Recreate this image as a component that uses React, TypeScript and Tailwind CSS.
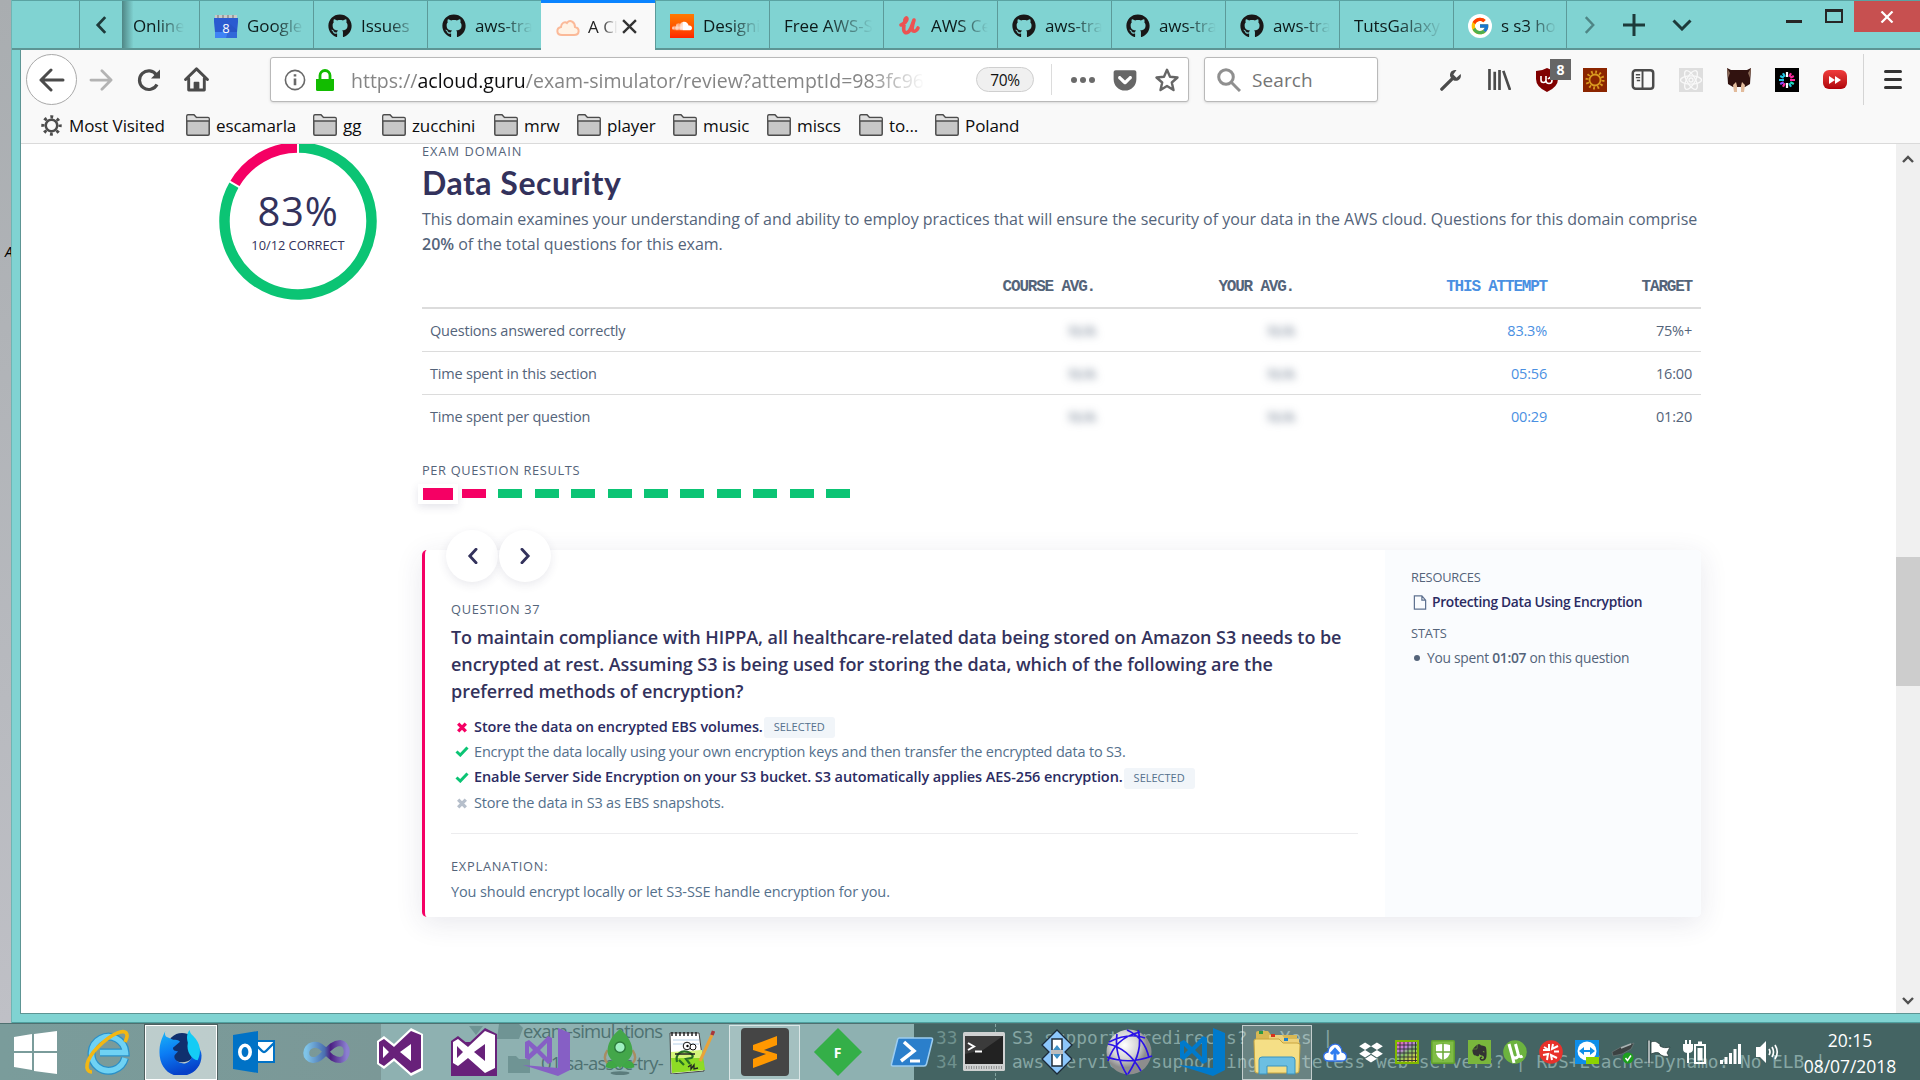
import React from "react";
import { FaGithub, FaSoundcloud, FaDropbox, FaEvernote, FaGetPocket } from "react-icons/fa";
import { FcGoogle } from "react-icons/fc";

type Kids = { children?: React.ReactNode };

/* ---------- tab strip ---------- */

const fade = "[mask-image:linear-gradient(to_right,#000_45%,transparent_98%)]";

function CalendarIcon() {
  return (
    <svg viewBox="0 0 24 24" className="h-6 w-6">
      <path d="M1 1h22v4H1z" fill="#c9c9c9" />
      <path d="M4 1v3M9 1v3M14 1v3M19 1v3" stroke="#8a8a8a" strokeWidth="1.4" />
      <path d="M0 4h24v4l-1 10H1L0 8z" fill="#2a5bd0" />
      <path d="M1 18h22v6H1z" fill="#3f83f4" />
      <path d="M16 10l7 6v8H12z" fill="#2450bb" opacity=".5" />
      <text x="12" y="18.5" textAnchor="middle" fontSize="13" fontFamily="Open Sans, sans-serif" fill="#fff">8</text>
    </svg>
  );
}
function SoundcloudIcon() {
  return (
    <span className="flex h-6 w-6 items-center justify-center bg-linear-to-b from-[#ff7a00] to-[#ff2200]">
      <FaSoundcloud className="h-5 w-5 text-white" />
    </span>
  );
}
function UdemyIcon() {
  return (
    <svg viewBox="0 0 24 24" className="h-6 w-6" fill="none" stroke="#ec5252" strokeWidth="3.6" strokeLinecap="round" strokeLinejoin="round">
      <path d="M3 11c3-1 6-4 6-6 0-2-2-1-2 1-1 5-2 8-1 11s5 2 7-3l3-8c-1 4-3 9-1 11 2 1 4-1 5-3" />
    </svg>
  );
}
function CloudIcon() {
  return (
    <svg viewBox="0 0 24 24" className="h-6 w-6" fill="#fff3e6" stroke="#fbb998" strokeWidth="2">
      <path d="M6 20c-6 0-6-7-1-8 0-4 4-6 6-4 3-4 8-1 8 4 5 1 5 8-1 8z" />
    </svg>
  );
}
const Hub = () => <FaGithub className="h-6 w-6 text-[#191717]" />;
const GoogleBall = () => (
  <span className="flex h-6 w-6 items-center justify-center rounded-full bg-white">
    <FcGoogle className="h-[20px] w-[20px]" />
  </span>
);

function Tab({ icon, label, last }: { icon?: React.ReactNode; label: string; last?: boolean }) {
  return (
    <div className={`flex h-full w-[114px] shrink-0 items-center border-l border-[#5c9a99] pl-[14px] pr-2 pt-[3px] ${last ? "border-r" : ""}`}>
      {icon && <span className="mr-[9px] shrink-0">{icon}</span>}
      <span className={`min-w-0 flex-1 overflow-hidden whitespace-nowrap text-[17px] tracking-[-0.1px] text-[#0c1a1a] ${fade}`}>{label}</span>
    </div>
  );
}

function TabBar() {
  return (
    <div className="flex h-[50px] items-stretch border-b-2 border-t border-b-[#5d9594] border-t-[#5aa3a2] text-[#1d3a3a]">
      <div className="w-[67px]" />
      <div className="flex w-[43px] items-center justify-center border-l border-[#5c9a99]">
        <svg viewBox="0 0 14 20" className="h-[20px] w-[13px]" fill="none" stroke="currentColor" strokeWidth="3"><path d="M11 1.500L3 10l8 8.500" /></svg>
      </div>
      <div className="flex w-[77px] items-center bg-linear-to-r from-[#4f8685] to-transparent to-15% pl-[11px] pr-[14px] pt-[3px] text-[17px] tracking-[-0.1px] text-[#0c1a1a]">
        <span className={`overflow-hidden whitespace-nowrap ${fade}`}>Online</span>
      </div>
      <Tab icon={<CalendarIcon />} label="Google C" />
      <Tab icon={<Hub />} label="Issues" />
      <Tab icon={<Hub />} label="aws-train" />
      <div className="-mb-[2px] -mt-px flex w-[114px] shrink-0 items-center border-t-[3px] border-[#0a84ff] bg-[#f9f9f9] pl-[15px]">
        <CloudIcon />
        <span className={`ml-[8px] w-[30px] overflow-hidden whitespace-nowrap text-[17px] text-[#222] ${fade}`}>A Clo</span>
        <svg viewBox="0 0 14 14" className="ml-[4px] h-[15px] w-[15px]" stroke="#333" strokeWidth="2.200"><path d="M1 1l12 12M13 1L1 13" /></svg>
      </div>
      <Tab icon={<SoundcloudIcon />} label="Designing" />
      <Tab label="Free AWS-So" />
      <Tab icon={<UdemyIcon />} label="AWS Ce" />
      <Tab icon={<Hub />} label="aws-train" />
      <Tab icon={<Hub />} label="aws-train" />
      <Tab icon={<Hub />} label="aws-train" />
      <Tab label="TutsGalaxy" />
      <Tab icon={<GoogleBall />} label="s s3 hos" last />
      <div className="flex items-center pl-[16px]">
        <svg viewBox="0 0 14 20" className="h-[20px] w-[13px] opacity-50" fill="none" stroke="currentColor" strokeWidth="2.600"><path d="M3 1.500L11 10l-8 8.500" /></svg>
        <svg viewBox="0 0 22 22" className="ml-[27px] h-[22px] w-[22px]" stroke="currentColor" strokeWidth="3"><path d="M11 0v22M0 11h22" /></svg>
        <svg viewBox="0 0 20 12" className="ml-[27px] h-[12px] w-[20px]" fill="none" stroke="currentColor" strokeWidth="3"><path d="M1.500 1.500L10 10l8.500-8.500" /></svg>
      </div>
      <div className="ml-auto flex items-start">
        <div className="mr-[23px] mt-[19px] h-[3px] w-[16px] bg-[#262626]" />
        <div className="mr-[11px] mt-[8px] h-[14px] w-[18px] border-2 border-t-[3px] border-[#262626]" />
        <div className="flex h-[31px] w-[66px] items-center justify-center bg-[#c75050]">
          <svg viewBox="0 0 14 12" className="h-[12px] w-[14px]" stroke="#fff" strokeWidth="2.200"><path d="M1.500.5l11 11M12.500.5l-11 11" /></svg>
        </div>
      </div>
    </div>
  );
}

/* ---------- navigation toolbar ---------- */

function Slot({ children }: Kids) {
  return <div className="flex w-12 shrink-0 items-center justify-center">{children}</div>;
}

function NavBar() {
  return (
    <div className="flex h-[58px] items-center pt-px text-[#4b4b4b]">
      <div className="ml-[5px] flex h-[51px] w-[51px] items-center justify-center rounded-full border border-[#a9a9a9] bg-white">
        <svg viewBox="0 0 26 24" className="h-[24px] w-[26px]" fill="none" stroke="currentColor" strokeWidth="3" strokeLinecap="round" strokeLinejoin="round"><path d="M24 12H2M12 2L2 12l10 10" /></svg>
      </div>
      <svg viewBox="0 0 26 24" className="ml-[12px] h-[22px] w-[24px]" fill="none" stroke="#b3b3b3" strokeWidth="3" strokeLinecap="round" strokeLinejoin="round"><path d="M2 12h22M14 2l10 10-10 10" /></svg>
      <svg viewBox="0 0 24 24" className="ml-[24px] h-[24px] w-[24px]" fill="none" stroke="currentColor" strokeWidth="3.200"><path d="M20 16.500A9.300 9.300 0 1 1 19.500 7" /><path d="M23 1.500V10.500H14z" fill="currentColor" stroke="none" /></svg>
      <svg viewBox="0 0 24 24" className="ml-[23px] h-[25px] w-[25px]" fill="none" stroke="currentColor" strokeWidth="2.800" strokeLinejoin="round" strokeLinecap="round"><path d="M1.500 12L12 1.800 22.500 12M4.500 11v11h15V11" /><path d="M10 22v-7h4v7" fill="currentColor" strokeWidth="1.500" /></svg>
      <div className="ml-[61px] flex h-[45px] w-[919px] shrink-0 items-center rounded-[3px] border border-[#b9b9b9] bg-white shadow-sm">
        <svg viewBox="0 0 22 22" className="ml-[13px] h-[22px] w-[22px]" fill="none" stroke="#686868" strokeWidth="1.600"><circle cx="11" cy="11" r="9.600" /><path d="M11 9.500v6.800M11 5.200v2.400" strokeWidth="2.600" /></svg>
        <svg viewBox="0 0 18 22" className="ml-[10px] h-[22px] w-[18px]" fill="#12bc00"><path d="M0 10h18v10.500q0 1.500-1.500 1.500h-15Q0 22 0 20.500z" /><path d="M4 11V6.500a5 5 0 0 1 10 0V11" fill="none" stroke="#12bc00" strokeWidth="2.800" /></svg>
        <div className="ml-[17px] w-[574px] overflow-hidden whitespace-nowrap pt-[2px] text-[19.500px] text-[#858585] [mask-image:linear-gradient(to_right,#000_90%,transparent)]">
          https://<span className="text-[#0c0c0d]">acloud.guru</span>/exam-simulator/review?attemptId=983fc96e
        </div>
        <div className="ml-[51px] flex h-[25px] w-[58px] items-center justify-center rounded-full border border-[#cfcfcf] bg-[#f0f0f0] pt-[2px] text-[15.500px] tracking-[-0.3px] text-[#111]">70%</div>
        <div className="ml-[17px] h-[31px] w-px bg-[#dcdcdc]" />
        <svg viewBox="0 0 24 6" className="ml-[19px] h-[6px] w-[24px]" fill="#6a6a6a"><circle cx="3" cy="3" r="3" /><circle cx="12" cy="3" r="3" /><circle cx="21" cy="3" r="3" /></svg>
        <FaGetPocket className="ml-[17px] h-[26px] w-[26px] text-[#666]" />
        <svg viewBox="0 0 24 24" className="ml-[17px] h-[24px] w-[24px]" fill="none" stroke="#666" strokeWidth="2.400" strokeLinejoin="round"><path d="M12 1.800l3 7 7.500.7-5.700 5 1.700 7.500-6.500-4-6.500 4 1.700-7.500-5.700-5 7.500-.7z" /></svg>
      </div>
      <div className="ml-[15px] flex h-[45px] w-[174px] shrink-0 items-center rounded-[3px] border border-[#b9b9b9] bg-white shadow-sm">
        <svg viewBox="0 0 24 24" className="ml-[12px] h-[24px] w-[24px]" fill="none" stroke="#8f8f8f" strokeWidth="3"><circle cx="9" cy="9" r="7.300" /><path d="M14 14l9 9" /></svg>
        <span className="ml-[11px] pt-[2px] text-[19px] tracking-[0.1px] text-[#757575]">Search</span>
      </div>
      <div className="ml-[49px] flex shrink-0">
        <Slot><svg viewBox="0 0 24 24" className="h-[22px] w-[24px]"><path d="M2 22L13 11" stroke="#4b4b4b" strokeWidth="3.600" strokeLinecap="round" /><path d="M22.500 5.500l-4.500 4-3.500-3.500L18 1.200C13 0 9.500 4.500 11.500 9l3.500 3.500c5 1.800 9-2.500 7.500-7z" fill="#4b4b4b" /></svg></Slot>
        <Slot><svg viewBox="0 0 24 22" className="h-[21px] w-[23px]" stroke="#4b4b4b" strokeWidth="2.800"><path d="M1.500 0v22M7 3v19M12 1v21M16 2l7 20" /></svg></Slot>
        <Slot>
          <div className="relative">
            <svg viewBox="0 0 22 24" className="h-[24px] w-[22px]"><path d="M11 0q5 3 11 3v8q0 8-11 13Q0 19 0 11V3q6 0 11-3z" fill="#800000" /><path d="M5 8v4q0 2.500 2.500 2.500T10 12V8M10 12.500a3 3 0 1 0 3-3M16 11q-2-2-4 0" fill="none" stroke="#fff" strokeWidth="1.600" /></svg>
            <span className="absolute left-[14px] top-[-9px] flex h-[21px] w-[21px] items-center justify-center bg-[#666] text-[14px] font-bold text-white">8</span>
          </div>
        </Slot>
        <Slot>
          <svg viewBox="0 0 24 24" className="h-6 w-6"><path d="M0 0h24v24H0z" fill="#8b2500" /><circle cx="12" cy="12" r="8" fill="none" stroke="#d99a20" strokeWidth="3" strokeDasharray="1.700 2.490" /><circle cx="12" cy="12" r="5.500" fill="none" stroke="#d99a20" strokeWidth="1.800" /></svg>
        </Slot>
        <Slot><svg viewBox="0 0 24 22" className="h-[21px] w-[24px]" fill="none" stroke="#4b4b4b"><rect x="1.300" y="1.300" width="21.400" height="19.400" rx="3" strokeWidth="2.600" /><path d="M11.500 1v20" strokeWidth="2" /><path d="M4.500 6h4.500M4.500 9h4.500M5.500 12h3.500" strokeWidth="1.500" /></svg></Slot>
        <Slot>
          <svg viewBox="0 0 24 24" className="h-6 w-6"><path d="M0 0h24v24H0z" fill="#dedede" /><g fill="none" stroke="#f8f8f8" strokeWidth="1.300"><ellipse cx="12" cy="12" rx="10.500" ry="4.200" /><ellipse cx="12" cy="12" rx="10.500" ry="4.200" transform="rotate(60 12 12)" /><ellipse cx="12" cy="12" rx="10.500" ry="4.200" transform="rotate(120 12 12)" /><circle cx="12" cy="12" r="2" /></g></svg>
        </Slot>
        <Slot>
          <svg viewBox="0 0 24 24" className="h-6 w-6"><path d="M0 0l4 2h16l4-2-1 16-5 3H6l-5-3z" fill="#31120f" /><path d="M6 17l3-3 1 4v6H7zM18 17l-3-3-1 4v6h3z" fill="#e2bb9b" /><path d="M0 0l3 5-2 5zM24 0l-3 5 2 5z" fill="#8a6a58" /></svg>
        </Slot>
        <Slot>
          <svg viewBox="0 0 24 24" className="h-6 w-6"><path d="M0 0h24v24H0z" fill="#000" /><g strokeWidth="2.200">
            <path d="M12 4v5M12 15v5" stroke="#fff" /><path d="M8 5.200l1.800 3.500M5.200 8l3.500 1.800M16 18.800l-1.800-3.500M4 12h5" stroke="#22c8e6" /><path d="M16 5.200l-1.800 3.500M18.800 8l-3.500 1.800M15 12h5M8 18.800l1.800-3.500" stroke="#ff2aa0" /><path d="M5.200 16l3.500-1.800" stroke="#8f4bff" /><path d="M18.800 16l-3.500-1.800" stroke="#22e0c0" /></g></svg>
        </Slot>
        <Slot>
          <span className="flex h-[19px] w-[24px] items-center justify-center rounded-[6px] bg-linear-to-b from-[#f03c3c] to-[#b00008]">
            <svg viewBox="0 0 12 8" className="h-[8px] w-[12px]" fill="#fff"><path d="M0 0l6 4-6 4zM6 0l6 4-6 4z" /></svg>
          </span>
        </Slot>
      </div>
      <div className="ml-[4px] h-[51px] w-px bg-[#d5d5d5]" />
      <div className="ml-[20px] flex flex-col gap-[5px]">
        <span className="h-[3px] w-[18px] rounded bg-[#333]" />
        <span className="h-[3px] w-[18px] rounded bg-[#333]" />
        <span className="h-[3px] w-[18px] rounded bg-[#333]" />
      </div>
    </div>
  );
}

/* ---------- bookmarks ---------- */

function Folder() {
  return (
    <svg viewBox="0 0 24 22" className="-mt-px h-[22px] w-[24px] shrink-0" stroke="#4c4c4c" strokeWidth="1.500"><path d="M.8 2q0-1.200 1.200-1.200h6l2.500 2.700H22q1.200 0 1.200 1.200v15.300q0 1.200-1.200 1.200H2Q.8 21.200.8 20z" fill="#c7c7c7" /><path d="M1.500 7V1.800h6L10 4.300h12.500V7z" fill="#dedede" stroke="none" /><path d="M1 7h22" /></svg>
  );
}
const bookmarks = [
  { name: "escamarla", w: "w-[127px]" },
  { name: "gg", w: "w-[69px]" },
  { name: "zucchini", w: "w-[112px]" },
  { name: "mrw", w: "w-[83px]" },
  { name: "player", w: "w-[96px]" },
  { name: "music", w: "w-[94px]" },
  { name: "miscs", w: "w-[92px]" },
  { name: "to...", w: "w-[76px]" },
  { name: "Poland", w: "w-[110px]" },
];
function Bookmarks() {
  return (
    <div className="flex h-[36px] items-center border-b border-[#dadada] text-[17px] tracking-[-0.1px] text-[#0c0c0d]">
      <div className="flex w-[165px] items-center pl-[20px]">
        <svg viewBox="0 0 22 22" className="h-[21px] w-[21px]" fill="none" stroke="#4c4c4c"><circle cx="11" cy="11" r="6" strokeWidth="2.600" /><circle cx="11" cy="11" r="9" strokeWidth="3.400" strokeDasharray="3 4.070" strokeDashoffset="1.500" /></svg>
        <span className="ml-[7px] whitespace-nowrap">Most Visited</span>
      </div>
      {bookmarks.map((b) => (
        <div key={b.name} className={`flex shrink-0 items-center gap-[6px] ${b.w}`}>
          <Folder />
          <span>{b.name}</span>
        </div>
      ))}
    </div>
  );
}

/* ---------- page ---------- */

function Ring() {
  return (
    <div className="relative ml-[198px] mt-[-2px] h-[158px] w-[158px] shrink-0">
      <svg viewBox="0 0 158 158" className="h-full w-full" fill="none" strokeWidth="10.500">
        <path d="M15.350 42.250A73.500 73.500 0 0 1 79 5.500" stroke="#f50064" />
        <path d="M79 5.500A73.500 73.500 0 1 1 15.350 42.250" stroke="#0bc474" />
        <path d="M79 0v12M10 39.200l12 6.900" stroke="#fff" strokeWidth="2" />
      </svg>
      <div className="absolute inset-0 flex flex-col items-center text-[#33325c]">
        <span className="mt-[42px] text-[40px] leading-[54px] tracking-[0.8px]">83%</span>
        <span className="-mt-px text-[12.800px] leading-[16px]">10/12 CORRECT</span>
      </div>
    </div>
  );
}

function Label({ children, className = "" }: Kids & { className?: string }) {
  return <div className={`text-[12.800px] leading-[16px] text-[#54647a] ${className}`}>{children}</div>;
}

const rows = [
  ["Questions answered correctly", "83.3%", "75%+"],
  ["Time spent in this section", "05:56", "16:00"],
  ["Time spent per question", "00:29", "01:20"],
];
const grid = "grid grid-cols-[681px_199px_253px_146px]";

function Stats() {
  return (
    <div className="mt-[5px]">
      <div className={`${grid} h-[47px] items-center border-b-2 border-[#dcdcdc] pt-[5px] text-right font-['Liberation_Mono',monospace] text-[16px] font-bold tracking-[-1.200px] text-[#54647a]`}>
        <span className="pr-[8px]">COURSE AVG.</span>
        <span className="pr-[8px]">YOUR AVG.</span>
        <span className="pr-[8px] text-[#4a90e2]">THIS ATTEMPT</span>
        <span className="pr-[9px]">TARGET</span>
      </div>
      {rows.map((r) => (
        <div key={r[0]} className={`${grid} h-[43px] items-center border-b border-[#dcdcdc] pt-[2px] text-right text-[14.500px] tracking-[-0.2px] text-[#54647a] last:border-0 last:pt-0`}>
          <span className="col-start-1 row-start-1 pl-2 text-left">{r[0]}</span>
          <span className="col-start-1 row-start-1 -mt-px pr-[7px] text-[15px] tracking-[0.3px] blur-[4px]">N/A</span>
          <span className="-mt-px pr-[7px] text-[15px] tracking-[0.3px] blur-[4px]">N/A</span>
          <span className="pr-2 text-[#4a90e2]">{r[1]}</span>
          <span className="pr-[9px]">{r[2]}</span>
        </div>
      ))}
    </div>
  );
}

function QuestionBars() {
  return (
    <div className="ml-[-4px] mt-[6px] flex h-[19px] items-center">
      <span className="flex h-[20px] w-[40px] items-center justify-center bg-white shadow-[0_3px_8px_rgba(50,50,93,.13)]">
        <span className="h-[12px] w-[30px] bg-[#f50064]" />
      </span>
      <span className="ml-[4px] h-[9px] w-[24px] bg-[#f50064]" />
      {Array.from({ length: 10 }, (_, i) => (
        <span key={i} className="ml-[12.400px] h-[9px] w-[24px] bg-[#0bc474]" />
      ))}
    </div>
  );
}

function RoundButton({ d }: { d: string }) {
  return (
    <span className="flex h-[52px] w-[52px] items-center justify-center rounded-full bg-white shadow-[0_3px_10px_rgba(50,50,93,.10)]">
      <svg viewBox="0 0 12 18" className="h-[16px] w-[11px]" fill="none" stroke="#33325c" strokeWidth="3.200" strokeLinecap="round"><path d={d} /></svg>
    </span>
  );
}

function Option({ kind, strong, children }: Kids & { kind: "wrong" | "right" | "off"; strong?: boolean }) {
  return (
    <div className="flex h-[25.300px] items-center whitespace-nowrap text-[14.500px] text-[#54708c]">
      <span className="mr-[5px] flex w-[18px] justify-end">
        {kind === "right" ? (
          <svg viewBox="0 0 13 11" className="h-[11px] w-[14px] text-[#0bc474]" fill="none" stroke="currentColor" strokeWidth="3"><path d="M1 5.500l3.800 3.500L12 1.500" /></svg>
        ) : (
          <svg viewBox="0 0 11 11" className={kind === "wrong" ? "mr-[2px] mt-[2px] h-[11px] w-[10px] text-[#f50064]" : "mr-[2px] mt-[2px] h-[11px] w-[10px] text-[#b6bfcb]"} stroke="currentColor" strokeWidth="3.600"><path d="M1.300 1.300l8.400 8.400M9.700 1.300L1.300 9.700" /></svg>
        )}
      </span>
      <span className={strong ? "font-semibold tracking-[-0.090px] text-[#2b2b62]" : "tracking-[-0.180px]"}>{children}</span>
      {strong && <span className="ml-px mt-[2px] flex h-[21px] w-[71px] items-center justify-center rounded-[3px] bg-[#f1f5f9] text-[11px] text-[#54708c]">SELECTED</span>}
    </div>
  );
}

function QuestionCard() {
  return (
    <div className="relative mt-[47px] flex h-[367px] rounded-[5px] border-l-[3px] border-[#f50064] bg-white shadow-[0_6px_28px_rgba(50,50,93,.11)]">
      <div className="absolute left-[21px] top-[-20px] flex gap-px">
        <RoundButton d="M10 1.500L3 9l7 7.500" />
        <RoundButton d="M2 1.500L9 9l-7 7.500" />
      </div>
      <div className="w-[960px] pl-[26px] pr-[27px]">
        <Label className="mt-[51px] tracking-[0.7px]">QUESTION 37</Label>
        <p className="mt-[7px] whitespace-nowrap text-[18px] font-semibold leading-[27px] tracking-[-0.050px] text-[#33325c]">
          To maintain compliance with HIPPA, all healthcare-related data being stored on Amazon S3 needs to be
          <br />
          encrypted at rest. Assuming S3 is being used for storing the data, which of the following are the
          <br />
          preferred methods of encryption?
        </p>
        <div className="mt-[9px]">
          <Option kind="wrong" strong>Store the data on encrypted EBS volumes.</Option>
          <Option kind="right">Encrypt the data locally using your own encryption keys and then transfer the encrypted data to S3.</Option>
          <Option kind="right" strong>Enable Server Side Encryption on your S3 bucket. S3 automatically applies AES-256 encryption.</Option>
          <Option kind="off">Store the data in S3 as EBS snapshots.</Option>
        </div>
        <div className="mt-[18px] h-px bg-[#ececee]" />
        <Label className="mt-[24px] tracking-[0.750px]">EXPLANATION:</Label>
        <p className="mt-[7px] text-[14.500px] leading-[22px] tracking-[-0.110px] text-[#54708c]">You should encrypt locally or let S3-SSE handle encryption for you.</p>
      </div>
      <div className="flex-1 rounded-r-[5px] bg-[#fafcfe] pl-[26px] text-[#54647a]">
        <Label className="mt-[19px] tracking-[-0.2px]">RESOURCES</Label>
        <div className="mt-[6px] flex h-[22px] items-center text-[13.800px]">
          <svg viewBox="0 0 14 16" className="ml-[2px] h-[15px] w-[14px]" fill="none" stroke="#5f7290" strokeWidth="1.300"><path d="M1 1h8l4 4.500V15H1zM9 1v4.500h4" /></svg>
          <span className="ml-[5px] whitespace-nowrap font-semibold tracking-[-0.310px] text-[#2b2b62]">Protecting Data Using Encryption</span>
        </div>
        <Label className="mt-[12px] tracking-[-0.1px]">STATS</Label>
        <div className="mt-[6px] flex h-[22px] items-center text-[13.800px] tracking-[-0.260px]">
          <span className="ml-[3px] h-[6px] w-[6px] rounded-full bg-[#54647a]" />
          <span className="ml-[7px] whitespace-nowrap">You spent <b className="font-semibold">01:07</b> on this question</span>
        </div>
      </div>
    </div>
  );
}

function Page() {
  return (
    <div className="flex min-h-0 flex-1">
      <main className="flex min-w-0 flex-1 overflow-hidden bg-white">
        <Ring />
        <section className="ml-[45px] w-[1279px] shrink-0">
          <Label className="-mt-px tracking-[1px]">EXAM DOMAIN</Label>
          <h1 className="mt-[3px] font-['Lato',sans-serif] text-[32px] font-bold leading-[42px] tracking-[0.5px] text-[#33325c]">Data Security</h1>
          <p className="mt-[3px] whitespace-nowrap text-[16px] leading-[25px] tracking-[-0.022px] text-[#54647a]">
            This domain examines your understanding of and ability to employ practices that will ensure the security of your data in the AWS cloud. Questions for this domain comprise
            <br />
            <b className="font-semibold">20%</b> of the total questions for this exam.
          </p>
          <Stats />
          <Label className="mt-[24px] tracking-[0.650px]">PER QUESTION RESULTS</Label>
          <QuestionBars />
          <QuestionCard />
        </section>
      </main>
      <div className="flex w-6 flex-col items-center bg-[#f0f0f0]">
        <svg viewBox="0 0 12 8" className="mt-[11px] h-[8px] w-[12px]" fill="none" stroke="#505050" strokeWidth="2.400"><path d="M1 7l5-5 5 5" /></svg>
        <div className="mt-[394px] h-[129px] w-full bg-[#cdcdcd]" />
        <svg viewBox="0 0 12 8" className="mb-[8px] mt-auto h-[8px] w-[12px]" fill="none" stroke="#505050" strokeWidth="2.400"><path d="M1 1l5 5 5-5" /></svg>
      </div>
    </div>
  );
}

/* ---------- task bar ---------- */

function TaskButton({ children, w, active }: Kids & { w: string; active?: "strong" | "soft" }) {
  const look = active === "strong" ? "border border-white bg-white/50 outline outline-1 -outline-offset-0 outline-[#4d5f5f]" : active === "soft" ? "border border-white/60 bg-white/20" : "";
  return <div className={`flex h-[55px] shrink-0 items-center justify-center ${w} ${look}`}>{children}</div>;
}

function InfinityLogo() {
  return (
    <svg viewBox="0 0 48 26" className="h-[26px] w-[48px]" fill="none" strokeWidth="6">
      <defs><linearGradient id="inf"><stop offset="0" stopColor="#7fc4e8" /><stop offset=".45" stopColor="#4a6fb0" /><stop offset=".6" stopColor="#4b1f82" /><stop offset="1" stopColor="#8a7fd0" /></linearGradient></defs>
      <path d="M24 13C19 6 15 5 11 6c-9 2-9 14 0 15 10 1 15-17 27-17 9 1 9 16 0 17-6 0-9-3-14-8z" stroke="url(#inf)" />
    </svg>
  );
}
function VsClassic({ flip }: { flip?: boolean }) {
  const a = flip ? "#68217a" : "#fff";
  const b = flip ? "#fff" : "#68217a";
  return (
    <svg viewBox="0 0 46 48" className="h-[48px] w-[46px]">
      {flip && <path d="M0 14h46v34H0z" fill="#68217a" />}
      <path d="M0 13l7-5 10 8L34 0l12 6v36l-12 6-17-15-10 8-7-5z" fill={a} />
      <path d="M2 14l5-3 10 8L34 3l10 4v33l-10 5-17-15-10 8-5-3z" fill={b} />
      <path d="M6 18l6 6-6 6zM34 16v17l-11-9z" fill={a} />
    </svg>
  );
}
function VsRibbon({ color }: { color: string }) {
  return (
    <svg viewBox="0 0 48 48" className="h-[48px] w-[48px]" fill={color}>
      <path d="M35 0l12 5v37l-12 6L0 37l35 3z" />
      <path fillRule="evenodd" d="M2 14l4-2 8 7L25 8l4 2v24l-4 2-11-11-8 7-4-2zM6 18v8l4-4zM24 15v14l-7-7z" />
    </svg>
  );
}

function Apps() {
  return (
    <div className="flex shrink-0 items-center">
      <TaskButton w="w-[71px]">
        <svg viewBox="0 0 43 43" className="h-[43px] w-[43px]" fill="#fff"><path d="M0 6l18-3v17H0zM20 3l23-3v20H20zM0 22h18v17L0 36zM20 22h23v21l-23-3z" /></svg>
      </TaskButton>
      <TaskButton w="w-[74px] pr-[3px]">
        <svg viewBox="0 0 46 46" className="h-[46px] w-[46px]" fill="none">
          <path d="M41 29A17 17 0 1 1 41.500 23.500H16" stroke="#2a90c8" strokeWidth="8" />
          <path d="M41 29A17 17 0 1 1 41.500 23.500H16" stroke="#6fd2f4" strokeWidth="5.500" />
          <path d="M8 43c-8 0-7-12 6-25S42-2 43 6c.5 2-1 5-2 7" stroke="#f3b713" strokeWidth="3.600" />
        </svg>
      </TaskButton>
      <TaskButton w="w-[72px]" active="strong">
        <svg viewBox="0 0 46 46" className="h-[45px] w-[46px]">
          <defs><linearGradient id="fx" x2=".3" y2="1"><stop offset="0" stopColor="#1ab8f8" /><stop offset=".5" stopColor="#0b7cf4" /><stop offset="1" stopColor="#0640c8" /></linearGradient></defs>
          <circle cx="24" cy="18" r="15" fill="#10306e" />
          <path d="M7 1c-1 3 0 5 1 6l7 3c3 0 5 0 7 2l-6 5c-2 1-1 3 0 4l4 1c-3 3-5 4-3 8 5 6 15 6 17-3 2-6-1-12-3-16 1-3 3-3 4-3 0 4 3 4 5 8 2 3 4 6 4 10 0 12-9 21-22 21S1 36 1 23C1 14 3 9 7 1z" fill="url(#fx)" />
          <path d="M32 0c0 4 3 5 6 9 6 8 5 16 2 22-6-1-12-9-10-18C28 6 30 2 32 0z" fill="#14ccf5" />
        </svg>
      </TaskButton>
      <TaskButton w="w-[74px]">
        <svg viewBox="0 0 42 42" className="h-[42px] w-[42px]"><path d="M20 10h21v21H20z" fill="#fff" stroke="#0072c6" strokeWidth="2" /><path d="M21 12l8 8q2 2 4 0l8-8" fill="none" stroke="#0072c6" strokeWidth="2.400" /><path d="M0 4l25-4v42L0 38z" fill="#0072c6" /><ellipse cx="12" cy="21" rx="5.200" ry="6.700" fill="none" stroke="#fff" strokeWidth="3.600" /></svg>
      </TaskButton>
      <TaskButton w="w-[69px]"><InfinityLogo /></TaskButton>
      <TaskButton w="w-[79px]"><VsClassic /></TaskButton>
      <TaskButton w="w-[69px]"><VsClassic flip /></TaskButton>
      <TaskButton w="w-[77px]"><VsRibbon color="#865fc5" /></TaskButton>
      <TaskButton w="w-[69px]">
        <svg viewBox="0 0 36 48" className="h-[46px] w-[36px]"><ellipse cx="18" cy="46" rx="10" ry="2" fill="#5b7c7c" /><path d="M5 22c-4 6-3 11 0 14M31 22c4 6 3 11 0 14" stroke="#a98d62" strokeWidth="2.500" fill="none" /><path d="M3 40q0-6 6-7h18q6 1 6 7-7 3-15-2-8 5-15 2z" fill="#3fa845" /><path d="M18 0C8 8 5 17 5 23c0 8 8 12 13 18 5-6 13-10 13-18 0-6-3-15-13-23z" fill="#43a74a" /><circle cx="18" cy="19" r="5.500" fill="#9ff0c2" stroke="#2b7b3a" strokeWidth="1.500" /></svg>
      </TaskButton>
      <TaskButton w="w-[75px]">
        <svg viewBox="0 0 46 44" className="h-[44px] w-[46px]">
          <path d="M1 3h29l5 38-33 3z" fill="#fff" stroke="#444" /><path d="M3 2v4M7 2v4M11 2v4M15 2v4M19 2v4M23 2v4M27 2v4" stroke="#222" strokeWidth="1.500" /><path d="M4 10h26M4 14h26" stroke="#b5d0e8" /><path d="M2 28l31-8 3 20-33 3z" fill="#8edb25" /><path d="M2 22l31-2v8H2z" fill="#d6f57a" /><path d="M8 32c-2-8 4-12 11-10 5 2 6 5 3 6l-5 1 4 5M10 30l5 5" stroke="#287023" strokeWidth="2.200" fill="none" /><circle cx="18" cy="16" r="3.800" fill="#fff" stroke="#111" /><circle cx="24" cy="17" r="3" fill="#fff" stroke="#111" /><circle cx="18.500" cy="16" r="1.200" /><path d="M6 24h20M19 37l3-2v4l3-4v4l4-1" stroke="#222" strokeWidth="1.300" fill="none" /><path d="M31 31L43 5" stroke="#e8a33a" strokeWidth="3" /><path d="M43 5l1.500-4" stroke="#a9363a" strokeWidth="3.500" />
        </svg>
      </TaskButton>
      <TaskButton w="w-[71px]" active="soft">
        <svg viewBox="0 0 48 48" className="h-12 w-12"><rect width="48" height="48" rx="4" fill="#454545" /><path d="M12 17L36 8v9l-13 5 13 4v5L12 40v-9l13-5-13-4z" fill="#ff9800" /></svg>
      </TaskButton>
      <TaskButton w="w-[75px]">
        <span className="flex h-[34px] w-[34px] rotate-45 items-center justify-center bg-[#34af48]"><span className="-rotate-45 text-[14px] font-bold text-white">F</span></span>
      </TaskButton>
      <TaskButton w="w-[75px] pr-[2px]">
        <svg viewBox="0 0 44 30" className="h-[30px] w-[44px]"><path d="M9 1h32q2 0 1.500 2l-6 24q-.5 2-2.500 2H3q-2 0-1.500-2l6-24q.5-2 1.500-2z" fill="#2b7fcb" stroke="#9ccdf0" strokeWidth="1.500" /><path d="M14 5l10 9-13 10" stroke="#fff" strokeWidth="3.500" fill="none" /><path d="M20 24h10" stroke="#fff" strokeWidth="3" /></svg>
      </TaskButton>
      <TaskButton w="w-[68px]">
        <svg viewBox="0 0 42 40" className="h-[40px] w-[42px]"><rect width="42" height="39" rx="1.500" fill="#cfd1d1" /><path d="M2 4h38v28H2z" fill="#222" /><path d="M2 4h38L20 18 2 22z" fill="#3b3b3b" /><path d="M5 11l6 3.500-6 3.500M12 19.500h7" stroke="#fff" strokeWidth="2" fill="none" /><path d="M3 35.500h36" stroke="#8d8f8f" strokeWidth="3" strokeDasharray="1 1.500" /></svg>
      </TaskButton>
      <TaskButton w="w-[78px]">
        <svg viewBox="0 0 32 46" className="h-[46px] w-[32px]" stroke="#1c2b3a"><path d="M16 1l15 15-7 7 7 7-15 15L1 30l7-7-7-7z" fill="#8cc6fb" strokeWidth="1.300" /><path d="M11 10h10v27H11z" fill="#fff" strokeWidth="1.500" /><path d="M10 21h12v4H10z" fill="#bdbdbd" stroke="none" /><path d="M12 21l4-5 4 5zM12 25l4 5 4-5z" fill="#3c8fc6" stroke="none" /></svg>
      </TaskButton>
      <TaskButton w="w-[65px]">
        <svg viewBox="0 0 48 48" className="h-12 w-12"><defs><radialGradient id="ball" cx=".4" cy=".35"><stop offset="0" stopColor="#fff" /><stop offset=".6" stopColor="#d4d4d4" /><stop offset="1" stopColor="#8d8d8d" /></radialGradient></defs><circle cx="24" cy="24" r="22.500" fill="url(#ball)" /><g fill="none" stroke="#2a12e8" strokeWidth="1.700"><path d="M2 29q22 8 45-1M3 16q20 4 33 27M12 6q-3 20 10 41M35 4Q10 10 3 33M22 2q18 8 22 28M4 14q20-10 36-4M33 2q6 20-10 44" /></g></svg>
      </TaskButton>
      <TaskButton w="w-[81px]"><VsRibbon color="#007acc" /></TaskButton>
      <TaskButton w="w-[70px]" active="soft">
        <svg viewBox="0 0 48 46" className="h-[46px] w-[48px]"><path d="M3 4q0-2 2-2h10l3 4h26v12H3z" fill="#d9b854" /><path d="M16 6h13l3 4h14v9H16z" fill="#edd27a" /><path d="M1 12q0-2 2-2h23l4 4h14q3 0 3 2l-1 26q0 2-2 2H4q-2 0-2-2z" fill="#f5df86" stroke="#c9a640" /><path d="M6 2h4v3H6z" fill="#2d9a44" /><path d="M18 5h4v3h-4z" fill="#d8331c" /><path d="M31 9h4v3h-4z" fill="#1d7fc9" /><path d="M6 45V31q0-3 3-3h30q3 0 3 3v14h-8v-8H14v8z" fill="#6cbfe2" stroke="#3a93bd" /></svg>
      </TaskButton>
    </div>
  );
}

function Tray() {
  return (
    <div className="flex shrink-0 items-center pl-[5px]">
      {[
        <svg viewBox="0 0 24 20" className="h-[20px] w-[24px]"><path d="M6 19c-7 0-7-8-1-9 0-9 13-12 14 0 6 1 6 9 0 9z" fill="#fff" stroke="#2f6fe6" strokeWidth="1.300" /><path d="M12 18v-8M8 12l4-4.500 4 4.500" stroke="#2f7df0" strokeWidth="3" fill="none" /></svg>,
        <FaDropbox className="h-[23px] w-[24px] text-white" />,
        <svg viewBox="0 0 24 24" className="h-6 w-6"><defs><linearGradient id="gr" x2=".6" y2="1"><stop offset="0" stopColor="#f06a98" /><stop offset=".4" stopColor="#c080e0" /><stop offset=".6" stopColor="#7fc06c" /><stop offset="1" stopColor="#e2d040" /></linearGradient></defs><path d="M1 1h22v22H1z" fill="url(#gr)" stroke="#7fb800" strokeWidth="2" /><path d="M5 2v20M9 2v20M13 2v20M17 2v20M20.500 2v20M2 5h20M2 9h20M2 13h20M2 17h20M2 20.500h20" stroke="#2c2b33" strokeWidth=".9" /></svg>,
        <svg viewBox="0 0 24 24" className="h-6 w-6"><rect width="24" height="24" rx="1.500" fill="#5fa02c" /><rect x="1.500" y="1.500" width="21" height="21" fill="#7fbc45" /><path d="M5 5q7-2 14 0v7q0 5-7 8-7-3-7-8z" fill="#fff" /><path d="M12 3v18M4 12h16" stroke="#6aa836" strokeWidth="1.500" /></svg>,
        <span className="flex h-6 w-[23px] items-center justify-center bg-[#7ab63c]"><FaEvernote className="h-[19px] w-[19px] text-[#333]" /></span>,
        <svg viewBox="0 0 24 24" className="h-6 w-6"><circle cx="12" cy="12" r="11.800" fill="#6cb33f" /><path d="M6 4l3 11q1 4 5 2.500 2-1 1-4L12.500 4M15 14q1.500 4 4.500 2M9 15l2 8" stroke="#fff" strokeWidth="3" fill="none" /></svg>,
        <svg viewBox="0 0 24 24" className="h-6 w-6"><circle cx="12" cy="12" r="11.800" fill="#e8322c" /><path d="M10 4v6H4M14 4l-1 5 6-3M4 15l5-1-1 6M13 20l-1-5 6 3M15 11.500h5M5 7l5 3" stroke="#fff" strokeWidth="2" fill="none" /></svg>,
        <svg viewBox="0 0 24 24" className="h-6 w-6"><path d="M0 0h24v24H0z" fill="#0e8ee9" /><circle cx="12" cy="11" r="9.500" fill="#fff" /><path d="M4 11l5-4v3h6V7l5 4-5 4v-3H9v3z" fill="#0e8ee9" /><path d="M11 17h13v7H11z" fill="#8cd400" /></svg>,
        <svg viewBox="0 0 24 24" className="h-6 w-6"><path d="M1 12l9-5 13-4-3 6-9 5-9 2z" fill="#3c4242" stroke="#6d7a7a" strokeWidth=".7" /><path d="M10 8l10-4" stroke="#aab4b4" strokeWidth="1.500" /><circle cx="17" cy="18" r="5.500" fill="#1da01d" /><path d="M14.500 18l2 2.500 3.500-5" stroke="#fff" strokeWidth="1.500" fill="none" /></svg>,
        <svg viewBox="0 0 24 24" className="h-6 w-6" fill="#fff"><path d="M1 0h2v24H1zM4 2c5-2 6 1 9 2v2c3 2 6 2 10 1l-3 6 2 3c-4 1-8 0-10-3-3-1-5 0-8 1z" stroke="#263c3c" strokeWidth=".8" /></svg>,
        <svg viewBox="0 0 24 24" className="h-6 w-6" fill="none" stroke="#fff" strokeWidth="2"><path d="M3 0v5M7 0v5M5 12v11" /><path d="M1 5h8v4q0 3-4 3T1 9z" fill="#fff" /><path d="M12 5h10v18H12z" /><path d="M15 1.500h4v3h-4zM14.500 8h5v12.500h-5z" fill="#fff" stroke="none" /></svg>,
        <svg viewBox="0 0 22 20" className="mt-1 h-[20px] w-[22px]" fill="#fff"><path d="M0 16h3v4H0zM4.500 13h3v7h-3zM9 9h3v11H9zM13.500 5h3v15h-3zM18 0h3v20h-3z" /></svg>,
        <svg viewBox="0 0 24 24" className="h-6 w-6" fill="none" stroke="#fff" strokeWidth="1.700"><path d="M1 7h4l6-6v22l-6-6H1z" fill="#fff" stroke="none" /><path d="M14 9q2 3 0 6M17 7q3 5 0 10M20 5q4.500 7 0 14" /></svg>,
      ].map((icon, i) => (
        <div key={i} className="flex w-[36px] items-center justify-center">{icon}</div>
      ))}
    </div>
  );
}

function TaskBar() {
  return (
    <div className="relative h-[57px] overflow-hidden border-t border-[#4f7070] bg-[#7a9d9c]">
      {/* windows behind the glass */}
      <div className="absolute inset-0 flex">
        <div className="w-[381px] bg-linear-to-r from-[#7a9c9b] to-[#7b9897]" />
        <div className="relative w-[533px] bg-[#8eb1b1] text-[18.500px] tracking-[-0.850px] text-[#4f7171]">
          <span className="absolute left-[142px] top-[-8px] whitespace-nowrap leading-[30px]">exam-simulations</span>
          <span className="absolute left-[160px] top-[24px] whitespace-nowrap leading-[30px]">01-sa-assoc-try-</span>
          <svg viewBox="0 0 80 60" className="absolute left-[88px] top-0 h-[60px] w-[80px]" fill="#6f9494"><path d="M0 2h14l-7 9zM30 0h20l4 4-4 11H28zM39 32h8l3 3h11v14H39z" /></svg>
        </div>
        <div className="relative flex-1 whitespace-pre bg-[#446463] font-['DejaVu_Sans_Mono',monospace] text-[17.800px] leading-[24px] text-[#86a6a3]">
          <div className="absolute left-[22px] top-[2px] text-[#6f918e]">33<br />34</div>
          <div className="absolute left-[98px] top-[2px]">
            S3 supports redirects? | Yes |<br />
            aws services supporting stateless web servers? | RDS+ECache+Dynamo: No ELB |
          </div>
          <div className="absolute left-[81px] top-0 h-[57px] border-l border-dashed border-[#86a6a3]" />
        </div>
      </div>
      <div className="relative flex h-full items-center">
        <Apps />
        <Tray />
        <div className="ml-auto flex w-[140px] flex-col items-center pr-[5px] pt-[2px] text-[17.500px] leading-[26px] tracking-[-0.050px] text-white">
          <span>20:15</span>
          <span>08/07/2018</span>
        </div>
      </div>
    </div>
  );
}

export default function App() {
  return (
    <div className="flex h-[1080px] w-[1920px] flex-col overflow-hidden bg-[#b3b6ba] font-['Open_Sans','Noto_Sans',sans-serif]">
      <div className="flex min-h-0 flex-1">
        <div className="flex w-[11px] items-center overflow-hidden bg-linear-to-b from-[#a9adb0] to-[#bfc0c6]">
          <span className="mt-[-521px] pl-[5px] text-[14px] italic text-black">A</span>
        </div>
        <div className="flex min-w-0 flex-1 flex-col border-l border-[#6fb5b4] bg-[#80d3d2]">
          <TabBar />
          <div className="ml-[8px] flex min-h-0 flex-1 flex-col border-b border-l border-[#5d9594] bg-[#f9f9f9]">
            <NavBar />
            <Bookmarks />
            <Page />
          </div>
          <div className="h-[9px] border-b border-[#4fa09f]" />
        </div>
      </div>
      <TaskBar />
    </div>
  );
}
